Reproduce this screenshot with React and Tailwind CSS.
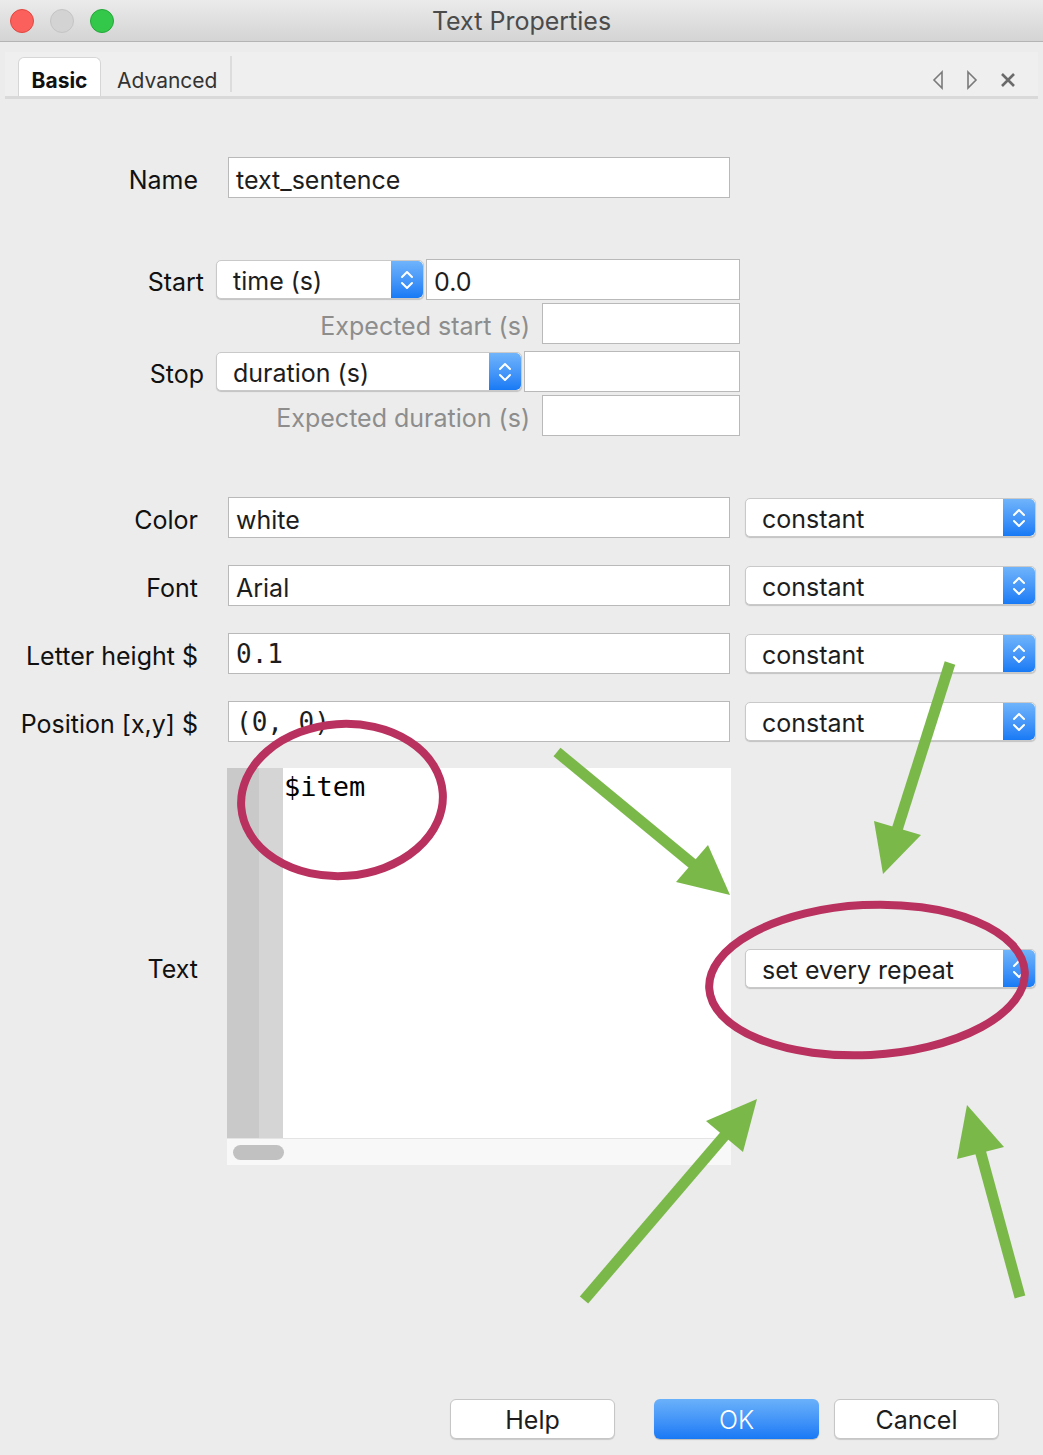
import React from 'react';

const sans = { fontFamily: 'Inter, "Liberation Sans", sans-serif' };
const mono = { fontFamily: '"DejaVu Sans Mono", "Liberation Mono", monospace' };

// blue stepper with the up/down chevrons
const Stepper = () => (
  <div className="flex h-full w-[32px] shrink-0 items-center justify-center rounded-r-[5px] bg-gradient-to-b from-[#6fb4fb] to-[#167af5]">
    <svg width="14" height="24" viewBox="0 0 14 24" fill="none" stroke="white" strokeWidth="2" strokeLinecap="round" strokeLinejoin="round">
      <path d="M2 9 L7 4 L12 9" />
      <path d="M2 15 L7 20 L12 15" />
    </svg>
  </div>
);

const Select = ({ value, width }) => (
  <div
    className="flex h-[39px] shrink-0 items-stretch overflow-hidden rounded-[5px] border border-[#c9c9c9] bg-white shadow-[0_1px_1px_rgba(0,0,0,0.18)]"
    style={{ width }}
  >
    <div className="flex flex-1 items-center pl-[16px] pt-[5px] text-[25px] text-[#1d1d1d]">{value}</div>
    <Stepper />
  </div>
);

const Input = ({ value, width, isMono }) => (
  <div
    className={`flex h-[41px] shrink-0 items-center border border-[#b9b9b9] bg-white pl-[7px] text-[#1d1d1d] ${isMono ? 'pt-[2px] text-[26px]' : 'pt-[7px] text-[25px]'}`}
    style={{ width, ...(isMono ? mono : {}) }}
  >
    {value}
  </div>
);

const Label = ({ children, width, gray }) => (
  <div className={`shrink-0 pt-[6px] text-right text-[25px] ${gray ? 'text-[#8d8d8d]' : 'text-[#111]'}`} style={{ width }}>
    {children}
  </div>
);

const Button = ({ children, primary }) =>
  primary ? (
    <div className="flex h-[40px] w-[165px] items-center justify-center rounded-[6px] bg-gradient-to-b from-[#6ab1fa] to-[#1779f5] pt-[4px] text-[25px] font-light text-white shadow-[0_1px_1px_rgba(0,0,0,0.2)]">
      {children}
    </div>
  ) : (
    <div className="flex h-[40px] w-[165px] items-center justify-center rounded-[6px] border border-[#c6c6c6] bg-white pt-[4px] text-[25px] text-[#1d1d1d] shadow-[0_1px_1px_rgba(0,0,0,0.15)]">
      {children}
    </div>
  );

const Annotations = () => (
  <svg className="pointer-events-none absolute left-0 top-0" width="1043" height="1455" viewBox="0 0 1043 1455">
    <g fill="none" stroke="#b9315f" strokeWidth="8">
      <ellipse cx="342" cy="800" rx="101" ry="76" transform="rotate(-4 342 800)" />
      <ellipse cx="867" cy="980" rx="158" ry="75" transform="rotate(-3 867 980)" />
    </g>
    <g stroke="#7bb84a" strokeWidth="11" fill="#7bb84a">
      <line x1="557" y1="752" x2="694" y2="865" />
      <polygon points="730,895 676,882 708,845" stroke="none" />
      <line x1="950" y1="663" x2="897" y2="830" />
      <polygon points="883,874 874,821 921,835" stroke="none" />
      <line x1="584" y1="1300" x2="726" y2="1134" />
      <polygon points="757,1099 706,1121 743,1152" stroke="none" />
      <line x1="1020" y1="1297" x2="980" y2="1150" />
      <polygon points="967,1105 957,1159 1004,1147" stroke="none" />
    </g>
  </svg>
);

export default function App() {
  return (
    <div className="relative h-[1455px] w-[1043px] overflow-hidden bg-[#ececec]" style={sans}>
      {/* title bar */}
      <div className="relative flex h-[42px] items-center border-b border-[#b4b4b4] bg-gradient-to-b from-[#ebebeb] to-[#d4d4d4]">
        <div className="flex gap-[16px] pl-[10px]">
          <div className="h-[24px] w-[24px] rounded-full border border-[#e2463f] bg-[#fc605c]" />
          <div className="h-[24px] w-[24px] rounded-full border border-[#c4c4c4] bg-[#d3d3d3]" />
          <div className="h-[24px] w-[24px] rounded-full border border-[#24a73a] bg-[#34c84a]" />
        </div>
        <div className="absolute inset-x-0 pt-[2px] text-center text-[25px] text-[#4b4b4b]">Text Properties</div>
      </div>

      {/* tab strip */}
      <div className="mx-[5px] mt-[10px] flex h-[47px] items-end border-b-[3px] border-[#d9d9d9] bg-[#efefef]">
        <div className="ml-[13px] flex h-[39px] w-[83px] items-center justify-center rounded-t-[6px] border border-b-0 border-[#d6d6d6] bg-white pt-[8px] text-[21px] font-bold text-[#111]">
          Basic
        </div>
        <div className="flex h-[39px] items-center pl-[16px] pr-[13px] pt-[8px] text-[21px] text-[#333]">Advanced</div>
        <div className="mb-[4px] h-[36px] w-[2px] bg-[#dcdcdc]" />
        <div className="ml-auto mb-[6px] mr-[22px] flex items-center gap-[22px]">
          <svg width="12" height="20" viewBox="0 0 12 20" fill="none" stroke="#7a7a7a" strokeWidth="1.6">
            <path d="M10 2 L2 10 L10 18 Z" />
          </svg>
          <svg width="12" height="20" viewBox="0 0 12 20" fill="none" stroke="#7a7a7a" strokeWidth="1.6">
            <path d="M2 2 L10 10 L2 18 Z" />
          </svg>
          <svg width="16" height="16" viewBox="0 0 16 16" fill="none" stroke="#6a6a6a" strokeWidth="2.6">
            <path d="M2 2 L14 14 M14 2 L2 14" />
          </svg>
        </div>
      </div>

      {/* form */}
      <div className="pt-[58px]">
        <div className="flex h-[41px] items-center gap-[30px]">
          <Label width={198}>Name</Label>
          <Input value="text_sentence" width={502} />
        </div>

        <div className="mt-[61px] flex h-[41px] items-center">
          <Label width={204}>Start</Label>
          <div className="ml-[12px]"><Select value="time (s)" width={208} /></div>
          <div className="ml-[2px]"><Input value="0.0" width={314} /></div>
        </div>
        <div className="mt-[3px] flex h-[41px] items-center gap-[12px]">
          <Label width={530} gray>Expected start (s)</Label>
          <Input value="" width={198} />
        </div>
        <div className="mt-[7px] flex h-[41px] items-center">
          <Label width={204}>Stop</Label>
          <div className="ml-[12px]"><Select value="duration (s)" width={306} /></div>
          <div className="ml-[2px]"><Input value="" width={216} /></div>
        </div>
        <div className="mt-[3px] flex h-[41px] items-center gap-[12px]">
          <Label width={530} gray>Expected duration (s)</Label>
          <Input value="" width={198} />
        </div>

        {[
          ['Color', 'white', false],
          ['Font', 'Arial', false],
          ['Letter height $', '0.1', true],
          ['Position [x,y] $', '(0, 0)', true],
        ].map(([label, value, isMono], i) => (
          <div key={label} className={`flex h-[41px] items-center ${i === 0 ? 'mt-[61px]' : 'mt-[27px]'}`}>
            <Label width={198}>{label}</Label>
            <div className="ml-[30px]"><Input value={value} width={502} isMono={isMono} /></div>
            <div className="ml-[15px]"><Select value="constant" width={291} /></div>
          </div>
        ))}

        {/* text code box */}
        <div className="mt-[26px] flex h-[397px] items-center">
          <Label width={198}>Text</Label>
          <div className="ml-[29px] flex h-full w-[504px] flex-col bg-white">
            <div className="flex flex-1">
              <div className="w-[32px] bg-[#c9c9c9]" />
              <div className="w-[24px] bg-[#d5d5d5]" />
              <div className="pl-[1px] pt-[2px] text-[27px] leading-[34px] text-black" style={mono}>
                $item
              </div>
            </div>
            <div className="flex h-[27px] items-center border-t border-[#e4e4e4] bg-[#f8f8f8] pl-[6px]">
              <div className="h-[15px] w-[51px] rounded-full bg-[#c1c1c1]" />
            </div>
          </div>
          <div className="ml-[14px] mt-[4px]"><Select value="set every repeat" width={291} /></div>
        </div>

        {/* buttons */}
        <div className="mt-[234px] flex justify-end pr-[44px]">
          <Button>Help</Button>
          <div className="ml-[39px]"><Button primary>OK</Button></div>
          <div className="ml-[15px]"><Button>Cancel</Button></div>
        </div>
      </div>

      <Annotations />
    </div>
  );
}
